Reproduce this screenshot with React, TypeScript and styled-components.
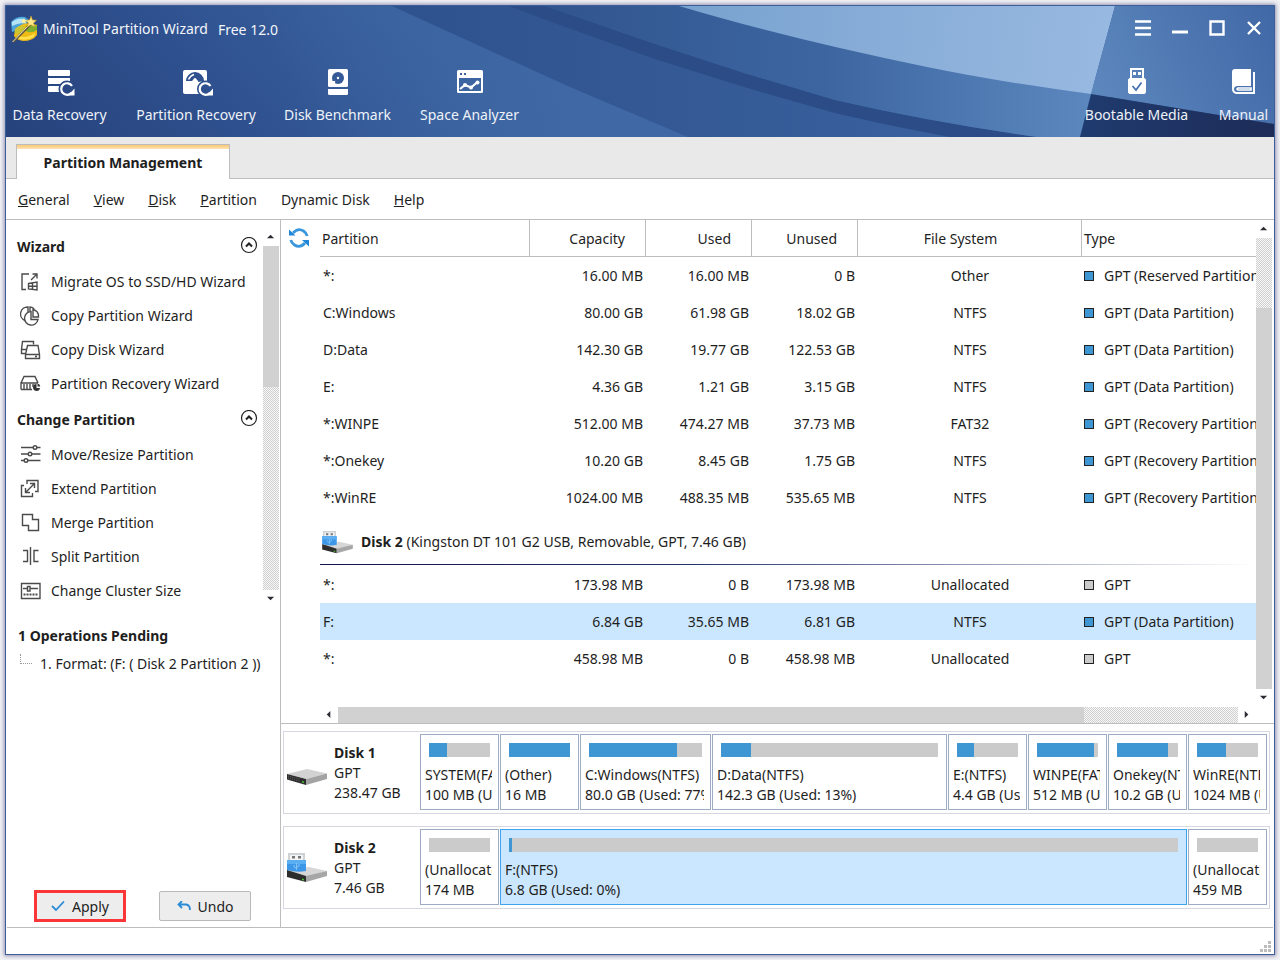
import React from "react";
import styled, { createGlobalStyle } from "styled-components";

const line = "#bdbdbd";
const blue = "#3e97d3";
const gray = "#cbcbcb";
const selected = "#cbe7ff";

const GlobalStyle = createGlobalStyle`
  * { box-sizing: border-box; }
  html, body { margin: 0; padding: 0; background: #f1f1f4; }
  body, button, table {
    font-family: "Noto Sans", "Open Sans", sans-serif;
    font-size: 14px;
    line-height: 20px;
    color: #1e1e1e;
  }
  button { border: 0; padding: 0; background: none; cursor: pointer; }
`;

const Page = styled.div`
  min-height: 100vh;
  padding: 5px;
  display: flex;
`;

const Window = styled.div`
  flex: 1;
  min-width: 0;
  display: flex;
  flex-direction: column;
  background: #fff;
  border: 1px solid #3d5f96;
  box-shadow: 0 0 4px 1px #8f8fb4;
`;

/* Header */
const Header = styled.header`
  position: relative;
  background: #2f5391;
`;
const HeaderArt = styled.svg`
  position: absolute;
  inset: 0;
  width: 100%;
  height: 100%;
`;
const TitleBar = styled.div`
  position: relative;
  height: 46px;
  padding: 0 2px 0 5px;
  display: flex;
  align-items: center;
  color: #f3f6fb;
`;
const Title = styled.h1`
  margin: 0 10px 0 5px;
  font-size: 14px;
  font-weight: 400;
  white-space: nowrap;
`;
const Edition = styled.span`
  flex: 1;
  padding-top: 2px;
  white-space: nowrap;
`;
const WindowButton = styled.button`
  width: 37px;
  height: 32px;
  padding-bottom: 2px;
  display: grid;
  place-items: center;
`;
const Toolbar = styled.div`
  position: relative;
  display: flex;
  justify-content: space-between;
  padding: 16px 6px 12px;
`;
const ToolGroup = styled.div`
  display: flex;
  gap: 29px;
`;
const ToolButton = styled.button<{ $w: number }>`
  width: ${(p) => p.$w}px;
  display: flex;
  flex-direction: column;
  align-items: center;
  gap: 9px;
  color: #eef2f9;
  white-space: nowrap;
`;

/* Tabs and menu */
const TabStrip = styled.div`
  height: 42px;
  padding: 7px 10px 0;
  background: #e9e9e9;
  box-shadow: inset 0 -1px ${line};
`;
const Tab = styled.button`
  width: 214px;
  height: 35px;
  padding-top: 2px;
  border: 1px solid ${line};
  border-bottom: 0;
  background: linear-gradient(#f9c876, #fde3b4) top / 100% 4px no-repeat #fff;
  font-weight: 700;
`;
const MenuBar = styled.nav`
  height: 41px;
  padding: 2px 12px 0;
  display: flex;
  align-items: center;
  gap: 24px;
  border-bottom: 1px solid ${line};
`;

const Body = styled.div`
  flex: 1;
  display: flex;
`;

/* Sidebar */
const Sidebar = styled.aside`
  flex: none;
  width: 275px;
  display: flex;
  flex-direction: column;
  border-right: 1px solid ${line};
`;
const ActionArea = styled.div`
  display: flex;
  padding: 8px 1px 0 0;
`;
const ActionList = styled.div`
  flex: 1;
  min-width: 0;
`;
const SectionHead = styled.div`
  height: 37px;
  padding: 0 5px 0 11px;
  display: flex;
  align-items: center;
  justify-content: space-between;
`;
const Heading = styled.h2`
  margin: 0;
  font-size: 14px;
  font-weight: 700;
`;
const CollapseButton = styled.button`
  display: flex;
  padding-bottom: 2px;
`;
const Action = styled.button`
  width: 100%;
  height: 34px;
  padding-left: 14px;
  display: flex;
  align-items: center;
  gap: 10px;
  white-space: nowrap;
  svg { flex: none; }
`;
const Pending = styled.div`
  flex: 1;
  padding: 18px 12px;
`;
const PendingItem = styled.div`
  margin-top: 8px;
  padding-left: 2px;
  display: flex;
  gap: 8px;
  white-space: nowrap;
`;
const Branch = styled.span`
  width: 12px;
  height: 10px;
  border-left: 1px dotted #999;
  border-bottom: 1px dotted #999;
`;
const ButtonRow = styled.div`
  display: flex;
  align-items: center;
  gap: 33px;
  padding: 0 28px 5px;
`;
const PushButton = styled.button<{ $marked?: boolean }>`
  width: 92px;
  height: ${(p) => (p.$marked ? 32 : 30)}px;
  padding-top: 2px;
  border: ${(p) => (p.$marked ? "3px solid #fb3638" : "1px solid #b9b9b9")};
  border-radius: ${(p) => (p.$marked ? 0 : 2)}px;
  background: #ededed;
  display: flex;
  align-items: center;
  justify-content: center;
  gap: 7px;
`;

/* Scroll bars */
const Scroll = styled.div<{ $row?: boolean }>`
  display: flex;
  flex-direction: ${(p) => (p.$row ? "row" : "column")};
  ${(p) => (p.$row ? "height: 16px;" : "width: 16px;")}
  flex: none;
`;
const ScrollButton = styled.button`
  flex: none;
  min-width: 16px;
  min-height: 16px;
  flex-basis: 18px;
  display: grid;
  place-items: center;
`;
const Track = styled.div<{ $row?: boolean }>`
  flex: 1;
  display: flex;
  flex-direction: ${(p) => (p.$row ? "row" : "column")};
  background: repeating-conic-gradient(#cfcfcf 0 25%, #f8f8f8 0 50%) 0 0 / 2px 2px;
`;
const Thumb = styled.div<{ $size: number }>`
  flex: ${(p) => p.$size};
  background: #d1d1d1;
`;
const Space = styled.div<{ $size: number }>`
  flex: ${(p) => p.$size};
`;

/* Main */
const Main = styled.main`
  flex: 1;
  min-width: 0;
  display: flex;
  flex-direction: column;
`;
const Upper = styled.section`
  flex: 1;
  display: grid;
  grid-template-columns: 39px minmax(0, 1fr) 16px;
  grid-template-rows: 1fr 16px;
  padding-right: 2px;
  border-bottom: 1px solid ${line};
`;
const RefreshCell = styled.div`
  grid-row: span 2;
  padding: 8px 0 0 8px;
`;
const TableArea = styled.div`
  overflow: hidden;
`;
const Table = styled.table`
  width: 100%;
  table-layout: fixed;
  border-collapse: separate;
  border-spacing: 0;
`;
type Align = { $align?: "left" | "right" | "center" };
const Th = styled.th<Align>`
  height: 37px;
  padding: 2px 20px 0 2px;
  font-weight: 400;
  text-align: ${(p) => p.$align ?? "left"};
  border-right: 1px solid ${line};
  border-bottom: 1px solid ${line};
  &:last-child { border-right: 0; }
`;
const Row = styled.tr<{ $selected?: boolean }>`
  background: ${(p) => (p.$selected ? selected : "transparent")};
`;
const Td = styled.td<Align>`
  height: 37px;
  padding: 0 3px;
  text-align: ${(p) => p.$align ?? "left"};
  white-space: nowrap;
  overflow: hidden;
  &:last-child { padding: 0 0 0 2px; }
`;
const TypeMark = styled.span<{ $on: boolean }>`
  display: inline-block;
  width: 10px;
  height: 10px;
  margin: 0 10px 0 0;
  border: 1px solid #222;
  background: ${(p) => (p.$on ? blue : gray)};
`;
const DiskCell = styled.td`
  height: 50px;
  padding: 0 0 1px;
`;
const DiskLine = styled.div`
  height: 49px;
  padding: 4px 2px 1px;
  display: flex;
  align-items: center;
  gap: 8px;
  background: linear-gradient(90deg, #12124f, #24346f 40%, #fff) bottom / 100% 1px no-repeat;
`;

/* Disk map */
const DiskMap = styled.section`
  padding: 7px 4px 18px 2px;
  display: flex;
  flex-direction: column;
  gap: 12px;
`;
const DiskPanel = styled.div`
  display: flex;
  padding: 2px 2px 3px;
  border: 1px solid #d5d8e0;
`;
const DiskInfo = styled.div<{ $tall?: boolean }>`
  flex: none;
  width: 134px;
  padding: 2px 0 0 1px;
  display: flex;
  align-items: center;
  gap: 7px;
  svg { margin-top: ${(p) => (p.$tall ? 0 : 8)}px; }
`;
const Parts = styled.div<{ $cols: number[] }>`
  flex: 1;
  min-width: 0;
  display: grid;
  grid-template-columns: ${(p) => p.$cols.map((c) => `minmax(0, ${c}fr)`).join(" ")};
  gap: 1px;
`;
const Part = styled.button<{ $selected?: boolean }>`
  min-width: 0;
  height: 76px;
  padding: 8px 6px 4px 4px;
  border: 1px solid ${(p) => (p.$selected ? "#3ea2ee" : "#9dabc5")};
  background: ${(p) => (p.$selected ? selected : "#fff")};
  text-align: left;
  white-space: nowrap;
  overflow: hidden;
`;
const Meter = styled.span`
  display: block;
  height: 14px;
  margin: 0 2px 8px 4px;
  background: ${gray};
`;
const Fill = styled.span`
  display: block;
  height: 100%;
  background: ${blue};
`;
const PartText = styled.span`
  display: block;
  overflow: hidden;
`;
const StatusBar = styled.footer`
  height: 27px;
  margin: 0 1px;
  border-top: 1px solid ${line};
  display: flex;
  align-items: flex-end;
  justify-content: flex-end;
  padding: 2px;
`;

/* Icons */
const Logo = () => (
  <svg width="27" height="27" viewBox="0 0 27 27" aria-hidden="true">
    <path d="M0 6Q5 0 14 1L18 4L13 12L1 16Z" fill="#4aa5dd" />
    <path d="M1 6Q7 1 14 3L11 7Q5 8 1 10Z" fill="#b6e4f7" />
    <path d="M4 13Q14 4 26 9V19Q22 25 12 25Q5 24 3 20Z" fill="#eebb16" />
    <path d="M15 10Q20 8 26 10V14Q20 18 15 15Z" fill="#7db02f" />
    <path d="M4 13Q9 9 14 10L12 17L4 18Z" fill="#c9c432" />
    <path d="M6 19Q14 24 24 17L23 21Q14 26 6 22Z" fill="#ffe04c" />
    <path d="M2 26L20 8" stroke="#5d553b" strokeWidth="2.4" />
    <path d="M1.500 26L19 8" stroke="#eee4b6" strokeWidth="1" />
    <path d="M20 0l1.500 4 4 .3-3 2.700 1 4-3.500-2.200-3.500 2.200 1-4-3-2.700 4-.3z" fill="#ffe98a" stroke="#c99822" strokeWidth=".6" />
    <path d="M13 2l1 2 2 .3-1.500 1.500.4 2L13 7l-2 .8.4-2L10 4.300l2-.3z" fill="#fff0a0" />
  </svg>
);

const Reload = ({ x, y }: { x: number; y: number }) => (
  <g transform={`translate(${x} ${y})`}>
    <path d="M5 -3A5.800 5.800 0 1 0 4.500 3.800" fill="none" stroke="#fff" strokeWidth="2.200" />
    <path d="M7.500 -.5V6.500H1Z" fill="#fff" />
  </g>
);
const DataRecoveryIcon = () => (
  <svg width="30" height="28" viewBox="-3 -2 30 28" aria-hidden="true">
    <mask id="cutData"><path fill="#fff" d="M0 0H27V26H0Z" /><circle cx="19" cy="19" r="8.500" fill="#000" /></mask>
    <g fill="#fff" mask="url(#cutData)">
      <rect width="22" height="6" rx="1" /><rect y="8" width="22" height="6" /><rect y="16" width="22" height="6" rx="1" />
    </g>
    <Reload x={19} y={19} />
  </svg>
);
const PartitionRecoveryIcon = () => (
  <svg width="34" height="28" viewBox="-4 -2 34 28" aria-hidden="true">
    <mask id="cutPart">
      <path fill="#fff" d="M0 0H30V26H0Z" />
      <circle cx="22.500" cy="19" r="8.500" fill="#000" />
      <path d="M3 11A9 9 0 0 1 21 11L15.500 12A3.500 3.500 0 0 0 9 11Z" fill="#000" />
      <path d="M5.500 9.500Q7.500 5.500 11 4.500" stroke="#fff" strokeWidth="1.600" fill="none" />
      <circle cx="12" cy="9.500" r="1.600" fill="#fff" />
    </mask>
    <rect width="24" height="24" rx="2" fill="#fff" mask="url(#cutPart)" />
    <Reload x={22.5} y={19} />
  </svg>
);
const BenchmarkIcon = () => (
  <svg width="20" height="28" viewBox="0 -1 20 28" aria-hidden="true">
    <rect width="20" height="18" rx="1.500" fill="#fff" />
    <path d="M0 20H20V24.500Q20 26 18.500 26H1.500Q0 26 0 24.500Z" fill="#fff" />
    <circle cx="10" cy="9" r="6" fill="#345a97" />
    <circle cx="10" cy="9" r="1.200" fill="#fff" />
    <path d="M3 11.500H7.500V15.500H3Z" fill="#fff" />
    <path d="M4 11L7.500 10.500L8 14.500L7 14V12H5Z" fill="#345a97" />
  </svg>
);
const AnalyzerIcon = () => (
  <svg width="26" height="28" viewBox="0 -2 26 28" aria-hidden="true">
    <path fillRule="evenodd" fill="#fff" d="M1.500 0H24.500Q26 0 26 1.500V21.500Q26 23 24.500 23H1.500Q0 23 0 21.500V1.500Q0 0 1.500 0ZM2 8V21H24V8ZM3 3V5H5V3ZM7 3V5H9V3Z" />
    <path d="M3 19L8 15L14 17.500L20 12.500" fill="none" stroke="#fff" strokeWidth="2.200" />
    <circle cx="8" cy="15" r="2" fill="#fff" /><circle cx="14" cy="17.500" r="2" fill="#fff" /><circle cx="20.500" cy="12.500" r="2" fill="#fff" />
  </svg>
);
const UsbIcon = () => (
  <svg width="18" height="28" viewBox="0 0 18 28" aria-hidden="true">
    <path fillRule="evenodd" fill="#fff" d="M2 0H16V10H2ZM4 2V10H14V2Z" />
    <path fill="#fff" d="M5 4H8V7H5ZM10 4H13V7H10ZM1.500 10H16.500L18 11.500V24.500L16.500 26H1.500L0 24.500V11.500Z" />
    <path d="M4.500 18L8 22L13.500 14.500" fill="none" stroke="#4674b0" strokeWidth="1.800" />
  </svg>
);
const BookIcon = () => (
  <svg width="24" height="28" viewBox="0 -1 24 28" aria-hidden="true">
    <path fill="#fff" d="M3 0H19V17H5Q2 17.500 2 20Q2 22.500 4 23H21V3H23V25H4Q0 24 0 20V3Q0 0 3 0Z" />
    <path d="M19 19H6Q4 20 6 21H19Z" fill="none" stroke="#fff" strokeWidth="1.600" />
  </svg>
);

const Line: React.FC<{ children: React.ReactNode }> = ({ children }) => (
  <svg width="21" height="20" viewBox="0 0 21 20" fill="none" stroke="#4b4b4b" strokeWidth="1.400" aria-hidden="true">{children}</svg>
);
const MigrateIcon = () => (
  <Line>
    <path d="M9 2H2V17.500H6M11 8L16.500 2.500M12.500 2H17V6.500" />
    <path d="M8.500 11.500L17 10V18L8.500 17ZM12.500 11V17.500M8.500 14.300H17" />
  </Line>
);
const CopyPartIcon = () => (
  <Line>
    <path d="M5 14.500A7 7 0 0 1 8 1V6M10 5V1Q13 1 14.500 3.500" />
    <path d="M11 5.500A6.800 6.800 0 1 0 18 13.500H11Z" />
    <path d="M13 3.500Q19 5 18.500 11H13Z" />
  </Line>
);
const CopyDiskIcon = () => (
  <Line>
    <path d="M5 13.500H1.500V9.500L2.500 1.500H13.500V4.500M1.500 9.500H6" />
    <path d="M7.500 5.500H18L19.500 14.500V18.500H5.500V14.500ZM5.500 14.500H19.500M15 16.500H17" />
  </Line>
);
const RecoverIcon = () => (
  <Line>
    <path d="M1 9L4 2.500H15L18 9M1 15.500V9H18M1 15.500H12M4 10V15M7 10V15M10 10V15M13 10V13" />
    <path d="M16.500 10A3.500 3.500 0 1 0 20 14H16.500Z" fill="#333" stroke="none" /><path d="M17.500 9.500Q20 10 20.300 12.500H17.500Z" fill="#333" stroke="none" />
  </Line>
);
const MoveIcon = () => (
  <Line>
    <path d="M1 2.500H13M17 2.500H20.500M1 9H8M12 9H20.500M1 15.500H4M8 15.500H20.500" />
    <circle cx="15" cy="2.500" r="1.800" /><circle cx="10" cy="9" r="1.800" /><circle cx="6" cy="15.500" r="1.800" />
  </Line>
);
const ExtendIcon = () => (
  <Line>
    <path d="M4 6.500H1.500V17.500H12.500V14M7 5V1.500H18V12.500H15" />
    <path d="M6 13L14 5M10 4.500H14.500V9M5.500 9V13.500H10" />
  </Line>
);
const MergeIcon = () => (
  <Line><path d="M2.500 1.500H12.500V6.500H18.500V17.500H8.500V12.500H2.500Z" /></Line>
);
const SplitIcon = () => (
  <Line><path d="M10.500 0V18M3 3.500H7.500V14.500H3M18.500 3.500H14V14.500H18.500" /></Line>
);
const ClusterIcon = () => (
  <Line>
    <path d="M1.500 2.500H20V17.500H1.500ZM3 7.500H7M10 7.500H18M7.500 5.500H10V10H7.500Z" />
    <path d="M3.500 13.500H18" strokeDasharray="2 1" strokeWidth="2" />
  </Line>
);

const CollapseIcon = () => (
  <svg width="18" height="18" viewBox="0 0 18 18" fill="none" stroke="#222" aria-hidden="true">
    <circle cx="9" cy="8" r="7.500" strokeWidth="1.200" /><path d="M6 9.500L9 6.500L12 9.500" strokeWidth="2" />
  </svg>
);
const RefreshIcon = () => (
  <svg width="20" height="20" viewBox="0 0 20 20" fill="none" stroke="#3a97dc" strokeWidth="2.800" aria-hidden="true">
    <path d="M4 5Q9 -.5 14.500 3Q17.500 5 18.200 8M16 15Q11 20.500 5.500 17Q2.500 15 1.800 12" />
    <path d="M0 1.500V7.500H6.500ZM20 18.500V12H13Z" fill="#1f86d8" stroke="none" />
  </svg>
);
const DriveIcon = () => (
  <svg width="40" height="17" viewBox="0 0 40 17" aria-hidden="true">
    <path d="M0 5L20 0L40 4.500L19 10Z" fill="#d2d2d2" />
    <path d="M0 5L19 10V16L0 10.500Z" fill="#2d2d2d" />
    <path d="M19 10L40 4.500V10L19 16Z" fill="#a3a3a3" />
    <path d="M1 7L13 10.200M1 9L13 12.200" stroke="#666" strokeDasharray="1 1" />
    <path d="M15 12L17 12.500V14L15 13.500Z" fill="#49c52d" />
  </svg>
);
const UsbDriveIcon = ({ width }: { width: number }) => (
  <svg width={width} height={Math.round(width * 0.75)} viewBox="0 0 40 30" aria-hidden="true">
    <path d="M0 17L22 14L40 18L19 24Z" fill="#d6d6d6" />
    <path d="M0 17L19 23V29L0 24Z" fill="#2d2d2d" />
    <path d="M19 23L40 18V23L19 29Z" fill="#a6a6a6" />
    <path d="M15 25.500L17 26V27.500L15 27Z" fill="#49c52d" />
    <path d="M1 0H18V8H1Z" fill="#cfd2d4" /><path d="M3 2H16V7H3Z" fill="#f4f4f4" />
    <path d="M5 3H8V5.500H5ZM11 3H14V5.500H11Z" fill="#777" />
    <path d="M0 7H19V18Q10 20 0 17Z" fill="#3d97e8" /><path d="M0 7H19V11H0Z" fill="#5aaef2" />
    <path d="M9.500 10V17M7 12V14L9.500 15.500M12 11V13L9.500 14.500" stroke="#86c4f6" fill="none" />
  </svg>
);

const arrows = {
  up: "M0 5L4 1L8 5Z",
  down: "M0 1L4 5L8 1Z",
  left: "M6 -1L2 3L6 7Z",
  right: "M2 -1L6 3L2 7Z",
};
const ScrollArrow = ({ dir }: { dir: keyof typeof arrows }) => (
  <ScrollButton aria-label={`Scroll ${dir}`}>
    <svg width="8" height="8" viewBox="0 -1 9 9"><path d={arrows[dir]} fill="#2b2b33" /></svg>
  </ScrollButton>
);

const sections = [
  {
    title: "Wizard",
    items: [
      ["Migrate OS to SSD/HD Wizard", MigrateIcon],
      ["Copy Partition Wizard", CopyPartIcon],
      ["Copy Disk Wizard", CopyDiskIcon],
      ["Partition Recovery Wizard", RecoverIcon],
    ],
  },
  {
    title: "Change Partition",
    items: [
      ["Move/Resize Partition", MoveIcon],
      ["Extend Partition", ExtendIcon],
      ["Merge Partition", MergeIcon],
      ["Split Partition", SplitIcon],
      ["Change Cluster Size", ClusterIcon],
    ],
  },
] as { title: string; items: [string, React.FC][] }[];

type Volume = [string, string, string, string, string, string];
const disk1: Volume[] = [
  ["*:", "16.00 MB", "16.00 MB", "0 B", "Other", "GPT (Reserved Partition)"],
  ["C:Windows", "80.00 GB", "61.98 GB", "18.02 GB", "NTFS", "GPT (Data Partition)"],
  ["D:Data", "142.30 GB", "19.77 GB", "122.53 GB", "NTFS", "GPT (Data Partition)"],
  ["E:", "4.36 GB", "1.21 GB", "3.15 GB", "NTFS", "GPT (Data Partition)"],
  ["*:WINPE", "512.00 MB", "474.27 MB", "37.73 MB", "FAT32", "GPT (Recovery Partition)"],
  ["*:Onekey", "10.20 GB", "8.45 GB", "1.75 GB", "NTFS", "GPT (Recovery Partition)"],
  ["*:WinRE", "1024.00 MB", "488.35 MB", "535.65 MB", "NTFS", "GPT (Recovery Partition)"],
];
const disk2: Volume[] = [
  ["*:", "173.98 MB", "0 B", "173.98 MB", "Unallocated", "GPT"],
  ["F:", "6.84 GB", "35.65 MB", "6.81 GB", "NTFS", "GPT (Data Partition)"],
  ["*:", "458.98 MB", "0 B", "458.98 MB", "Unallocated", "GPT"],
];

const VolumeRow = ({ v }: { v: Volume }) => (
  <Row $selected={v[0] === "F:"}>
    <Td>{v[0]}</Td>
    <Td $align="right">{v[1]}</Td>
    <Td $align="right">{v[2]}</Td>
    <Td $align="right">{v[3]}</Td>
    <Td $align="center">{v[4]}</Td>
    <Td><TypeMark $on={v[4] !== "Unallocated"} />{v[5]}</Td>
  </Row>
);

type MapPart = { name: string; size: string; span: number; used: number; selected?: boolean };
const maps: { name: string; size: string; usb?: boolean; parts: MapPart[] }[] = [
  {
    name: "Disk 1",
    size: "238.47 GB",
    parts: [
      { name: "SYSTEM(FAT32)", size: "100 MB (Used: 30%)", span: 79, used: 30 },
      { name: "(Other)", size: "16 MB", span: 79, used: 100 },
      { name: "C:Windows(NTFS)", size: "80.0 GB (Used: 77%)", span: 131, used: 78 },
      { name: "D:Data(NTFS)", size: "142.3 GB (Used: 13%)", span: 235, used: 14 },
      { name: "E:(NTFS)", size: "4.4 GB (Used: 27%)", span: 79, used: 28 },
      { name: "WINPE(FAT32)", size: "512 MB (Used: 92%)", span: 79, used: 93 },
      { name: "Onekey(NTFS)", size: "10.2 GB (Used: 82%)", span: 79, used: 83 },
      { name: "WinRE(NTFS)", size: "1024 MB (Used: 47%)", span: 79, used: 48 },
    ],
  },
  {
    name: "Disk 2",
    size: "7.46 GB",
    usb: true,
    parts: [
      { name: "(Unallocated)", size: "174 MB", span: 79, used: 0 },
      { name: "F:(NTFS)", size: "6.8 GB (Used: 0%)", span: 687, used: 0.5, selected: true },
      { name: "(Unallocated)", size: "459 MB", span: 79, used: 0 },
    ],
  },
];

const menus: [string, boolean][] = [
  ["General", true], ["View", true], ["Disk", true], ["Partition", true], ["Dynamic Disk", false], ["Help", true],
];

export default function App() {
  return (
    <Page>
      <GlobalStyle />
      <Window>
        <Header>
          <HeaderArt viewBox="6 6 1268 131" preserveAspectRatio="none" aria-hidden="true">
            <defs>
              <linearGradient id="base" gradientUnits="userSpaceOnUse" x1="60" y1="180" x2="330" y2="-60">
                <stop offset="0" stopColor="#27437d" /><stop offset=".5" stopColor="#2f518f" /><stop offset="1" stopColor="#3a629f" />
              </linearGradient>
              <linearGradient id="sweep" gradientUnits="userSpaceOnUse" x1="300" y1="137" x2="560" y2="60">
                <stop offset="0" stopColor="#3b639f" stopOpacity="0" /><stop offset="1" stopColor="#3f68a4" />
              </linearGradient>
              <linearGradient id="band" gradientUnits="userSpaceOnUse" x1="560" y1="0" x2="1090" y2="0">
                <stop offset="0" stopColor="#31558f" /><stop offset=".5" stopColor="#3d66a1" /><stop offset="1" stopColor="#5b87be" />
              </linearGradient>
              <linearGradient id="under" gradientUnits="userSpaceOnUse" x1="400" y1="0" x2="1000" y2="0">
                <stop offset="0" stopColor="#2e528d" /><stop offset="1" stopColor="#3b629f" />
              </linearGradient>
              <linearGradient id="pale" gradientUnits="userSpaceOnUse" x1="680" y1="0" x2="1110" y2="60">
                <stop offset="0" stopColor="#78a2cf" /><stop offset="1" stopColor="#98b9e1" />
              </linearGradient>
              <linearGradient id="right" gradientUnits="userSpaceOnUse" x1="1100" y1="100" x2="1274" y2="20">
                <stop offset="0" stopColor="#5c87bd" /><stop offset="1" stopColor="#4269a7" />
              </linearGradient>
              <linearGradient id="navy" gradientUnits="userSpaceOnUse" x1="1080" y1="0" x2="1274" y2="0">
                <stop offset="0" stopColor="#1f3b6f" /><stop offset="1" stopColor="#1e2c58" />
              </linearGradient>
            </defs>
            <path fill="url(#base)" d="M6 6H1274V137H6Z" />
            <path fill="url(#sweep)" d="M6 6H392L570 87L688 137H6Z" />
            <path fill="url(#under)" d="M392 6H1115L1080 137H688L570 87Z" />
            <path fill="#2b4c86" d="M509 6H545L652 43L744 73L835 100Q930 122 1037 137H950Q890 126 835 113L744 87L652 58L560 25Z" />
            <path fill="url(#band)" d="M545 6H700L1115 90L1080 137H1037Q930 122 835 100L744 73L652 43Z" />
            <path fill="url(#pale)" d="M679 6H1115L1091 94Q1000 82 927 67Q790 39 679 6Z" />
            <path fill="url(#right)" d="M1115 6H1274V124L1091 94Z" />
            <path fill="url(#navy)" d="M1091 94L1274 124V137H1080Z" />
          </HeaderArt>
          <TitleBar>
            <Logo />
            <Title>MiniTool Partition Wizard</Title>
            <Edition>Free 12.0</Edition>
            <WindowButton aria-label="Menu"><svg width="16" height="16" viewBox="0 0 16 16"><path d="M0 1.500H16M0 8H16M0 14.500H16" stroke="#fff" strokeWidth="2.400" /></svg></WindowButton>
            <WindowButton aria-label="Minimize"><svg width="16" height="16" viewBox="0 0 16 16"><path d="M0 12H16" stroke="#fff" strokeWidth="3" /></svg></WindowButton>
            <WindowButton aria-label="Maximize"><svg width="16" height="16" viewBox="0 0 16 16"><path d="M1.500 1.500H14.500V14.500H1.500Z" fill="none" stroke="#fff" strokeWidth="2.400" /></svg></WindowButton>
            <WindowButton aria-label="Close"><svg width="16" height="16" viewBox="0 0 16 16"><path d="M2 2L14 14M14 2L2 14" stroke="#fff" strokeWidth="2.400" /></svg></WindowButton>
          </TitleBar>
          <Toolbar>
            <ToolGroup>
              <ToolButton $w={95}><DataRecoveryIcon />Data Recovery</ToolButton>
              <ToolButton $w={120}><PartitionRecoveryIcon />Partition Recovery</ToolButton>
              <ToolButton $w={105}><BenchmarkIcon />Disk Benchmark</ToolButton>
              <ToolButton $w={101}><AnalyzerIcon />Space Analyzer</ToolButton>
            </ToolGroup>
            <ToolGroup>
              <ToolButton $w={107}><UsbIcon />Bootable Media</ToolButton>
              <ToolButton $w={49}><BookIcon />Manual</ToolButton>
            </ToolGroup>
          </Toolbar>
        </Header>
        <TabStrip><Tab>Partition Management</Tab></TabStrip>
        <MenuBar>
          {menus.map(([name, key]) => (
            <button key={name}>{key ? <><u>{name[0]}</u>{name.slice(1)}</> : name}</button>
          ))}
        </MenuBar>
        <Body>
          <Sidebar>
            <ActionArea>
              <ActionList>
                {sections.map((s) => (
                  <section key={s.title}>
                    <SectionHead>
                      <Heading>{s.title}</Heading>
                      <CollapseButton aria-label={`Collapse ${s.title}`}><CollapseIcon /></CollapseButton>
                    </SectionHead>
                    {s.items.map(([name, Icon]) => (
                      <Action key={name}><Icon />{name}</Action>
                    ))}
                  </section>
                ))}
              </ActionList>
              <Scroll>
                <ScrollArrow dir="up" />
                <Track><Thumb $size={142} /><Space $size={204} /></Track>
                <ScrollArrow dir="down" />
              </Scroll>
            </ActionArea>
            <Pending>
              <Heading>1 Operations Pending</Heading>
              <PendingItem><Branch />1. Format: (F: ( Disk 2 Partition 2 ))</PendingItem>
            </Pending>
            <ButtonRow>
              <PushButton $marked>
                <svg width="14" height="12" viewBox="0 0 14 12" aria-hidden="true"><path d="M1 5L5 9L13 .5" fill="none" stroke="#2a8bd6" strokeWidth="1.800" /></svg>
                Apply
              </PushButton>
              <PushButton>
                <svg width="14" height="12" viewBox="0 0 14 12" aria-hidden="true"><path d="M5 0L1.500 3.500L5 7M1.500 3.500H9Q13 4 13 9" fill="none" stroke="#2a8bd6" strokeWidth="1.800" /></svg>
                Undo
              </PushButton>
            </ButtonRow>
          </Sidebar>
          <Main>
            <Upper>
              <RefreshCell><button aria-label="Refresh"><RefreshIcon /></button></RefreshCell>
              <TableArea>
                <Table>
                  <colgroup>
                    <col width="210" /><col width="116" /><col width="106" /><col width="106" /><col width="224" /><col />
                  </colgroup>
                  <thead>
                    <tr>
                      <Th>Partition</Th>
                      <Th $align="right">Capacity</Th>
                      <Th $align="right">Used</Th>
                      <Th $align="right">Unused</Th>
                      <Th $align="center">File System</Th>
                      <Th>Type</Th>
                    </tr>
                  </thead>
                  <tbody>
                    {disk1.map((v) => <VolumeRow key={v[0] + v[1]} v={v} />)}
                    <tr>
                      <DiskCell colSpan={6}>
                        <DiskLine>
                          <UsbDriveIcon width={31} />
                          <span><b>Disk 2</b> (Kingston DT 101 G2 USB, Removable, GPT, 7.46 GB)</span>
                        </DiskLine>
                      </DiskCell>
                    </tr>
                    {disk2.map((v) => <VolumeRow key={v[0] + v[1]} v={v} />)}
                  </tbody>
                </Table>
              </TableArea>
              <Scroll>
                <ScrollArrow dir="up" />
                <Track><Space $size={70} /><Thumb $size={381} /></Track>
                <ScrollArrow dir="down" />
              </Scroll>
              <Scroll $row>
                <ScrollArrow dir="left" />
                <Track $row><Thumb $size={746} /><Space $size={154} /></Track>
                <ScrollArrow dir="right" />
              </Scroll>
            </Upper>
            <DiskMap>
              {maps.map((d) => (
                <DiskPanel key={d.name}>
                  <DiskInfo $tall={d.usb}>
                    {d.usb ? <UsbDriveIcon width={40} /> : <DriveIcon />}
                    <div><b>{d.name}</b><br />GPT<br />{d.size}</div>
                  </DiskInfo>
                  <Parts $cols={d.parts.map((p) => p.span)}>
                    {d.parts.map((p) => (
                      <Part key={p.name + p.size} $selected={p.selected}>
                        <Meter><Fill style={{ width: `${p.used}%` }} /></Meter>
                        <PartText>{p.name}<br />{p.size}</PartText>
                      </Part>
                    ))}
                  </Parts>
                </DiskPanel>
              ))}
            </DiskMap>
          </Main>
        </Body>
        <StatusBar>
          <svg width="11" height="11" viewBox="0 0 11 11" fill="#bcbcbc" aria-hidden="true">
            <path d="M8 0H11V3H8ZM8 4H11V7H8ZM8 8H11V11H8ZM4 4H7V7H4ZM4 8H7V11H4ZM0 8H3V11H0Z" />
          </svg>
        </StatusBar>
      </Window>
    </Page>
  );
}
